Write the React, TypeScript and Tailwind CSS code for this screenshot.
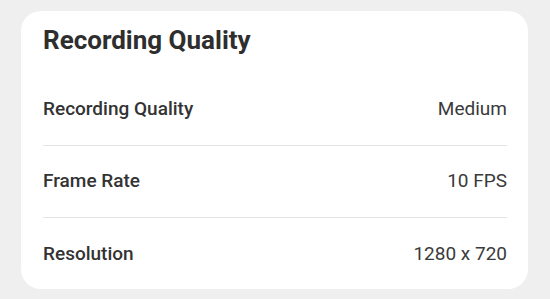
import React from "react";

const rows = [
  { label: "Recording Quality", value: "Medium" },
  { label: "Frame Rate", value: "10 FPS" },
  { label: "Resolution", value: "1280 x 720" },
];

export default function App() {
  return (
    <div className="w-[550px] h-[299px] bg-[#efefef] pt-[11px] pl-[21px] font-['Roboto',sans-serif]">
      <div className="w-[507px] h-[278px] bg-white rounded-[20px] pl-[22px] pr-[21px] pt-[14px]">
        <h2 className="text-[26px] leading-[30px] font-bold text-[#2e2e2e]">Recording Quality</h2>
        <div className="mt-[19px]">
          {rows.map((row, i) => (
            <div
              key={row.label}
              className={`flex h-[72px] items-center justify-between ${i < rows.length - 1 ? "border-b border-[#e4e4e4]" : ""}`}
            >
              <span className="text-[19px] font-medium text-[#333]">{row.label}</span>
              <span className="text-[19px] text-[#3a3a3a]">{row.value}</span>
            </div>
          ))}
        </div>
      </div>
    </div>
  );
}
